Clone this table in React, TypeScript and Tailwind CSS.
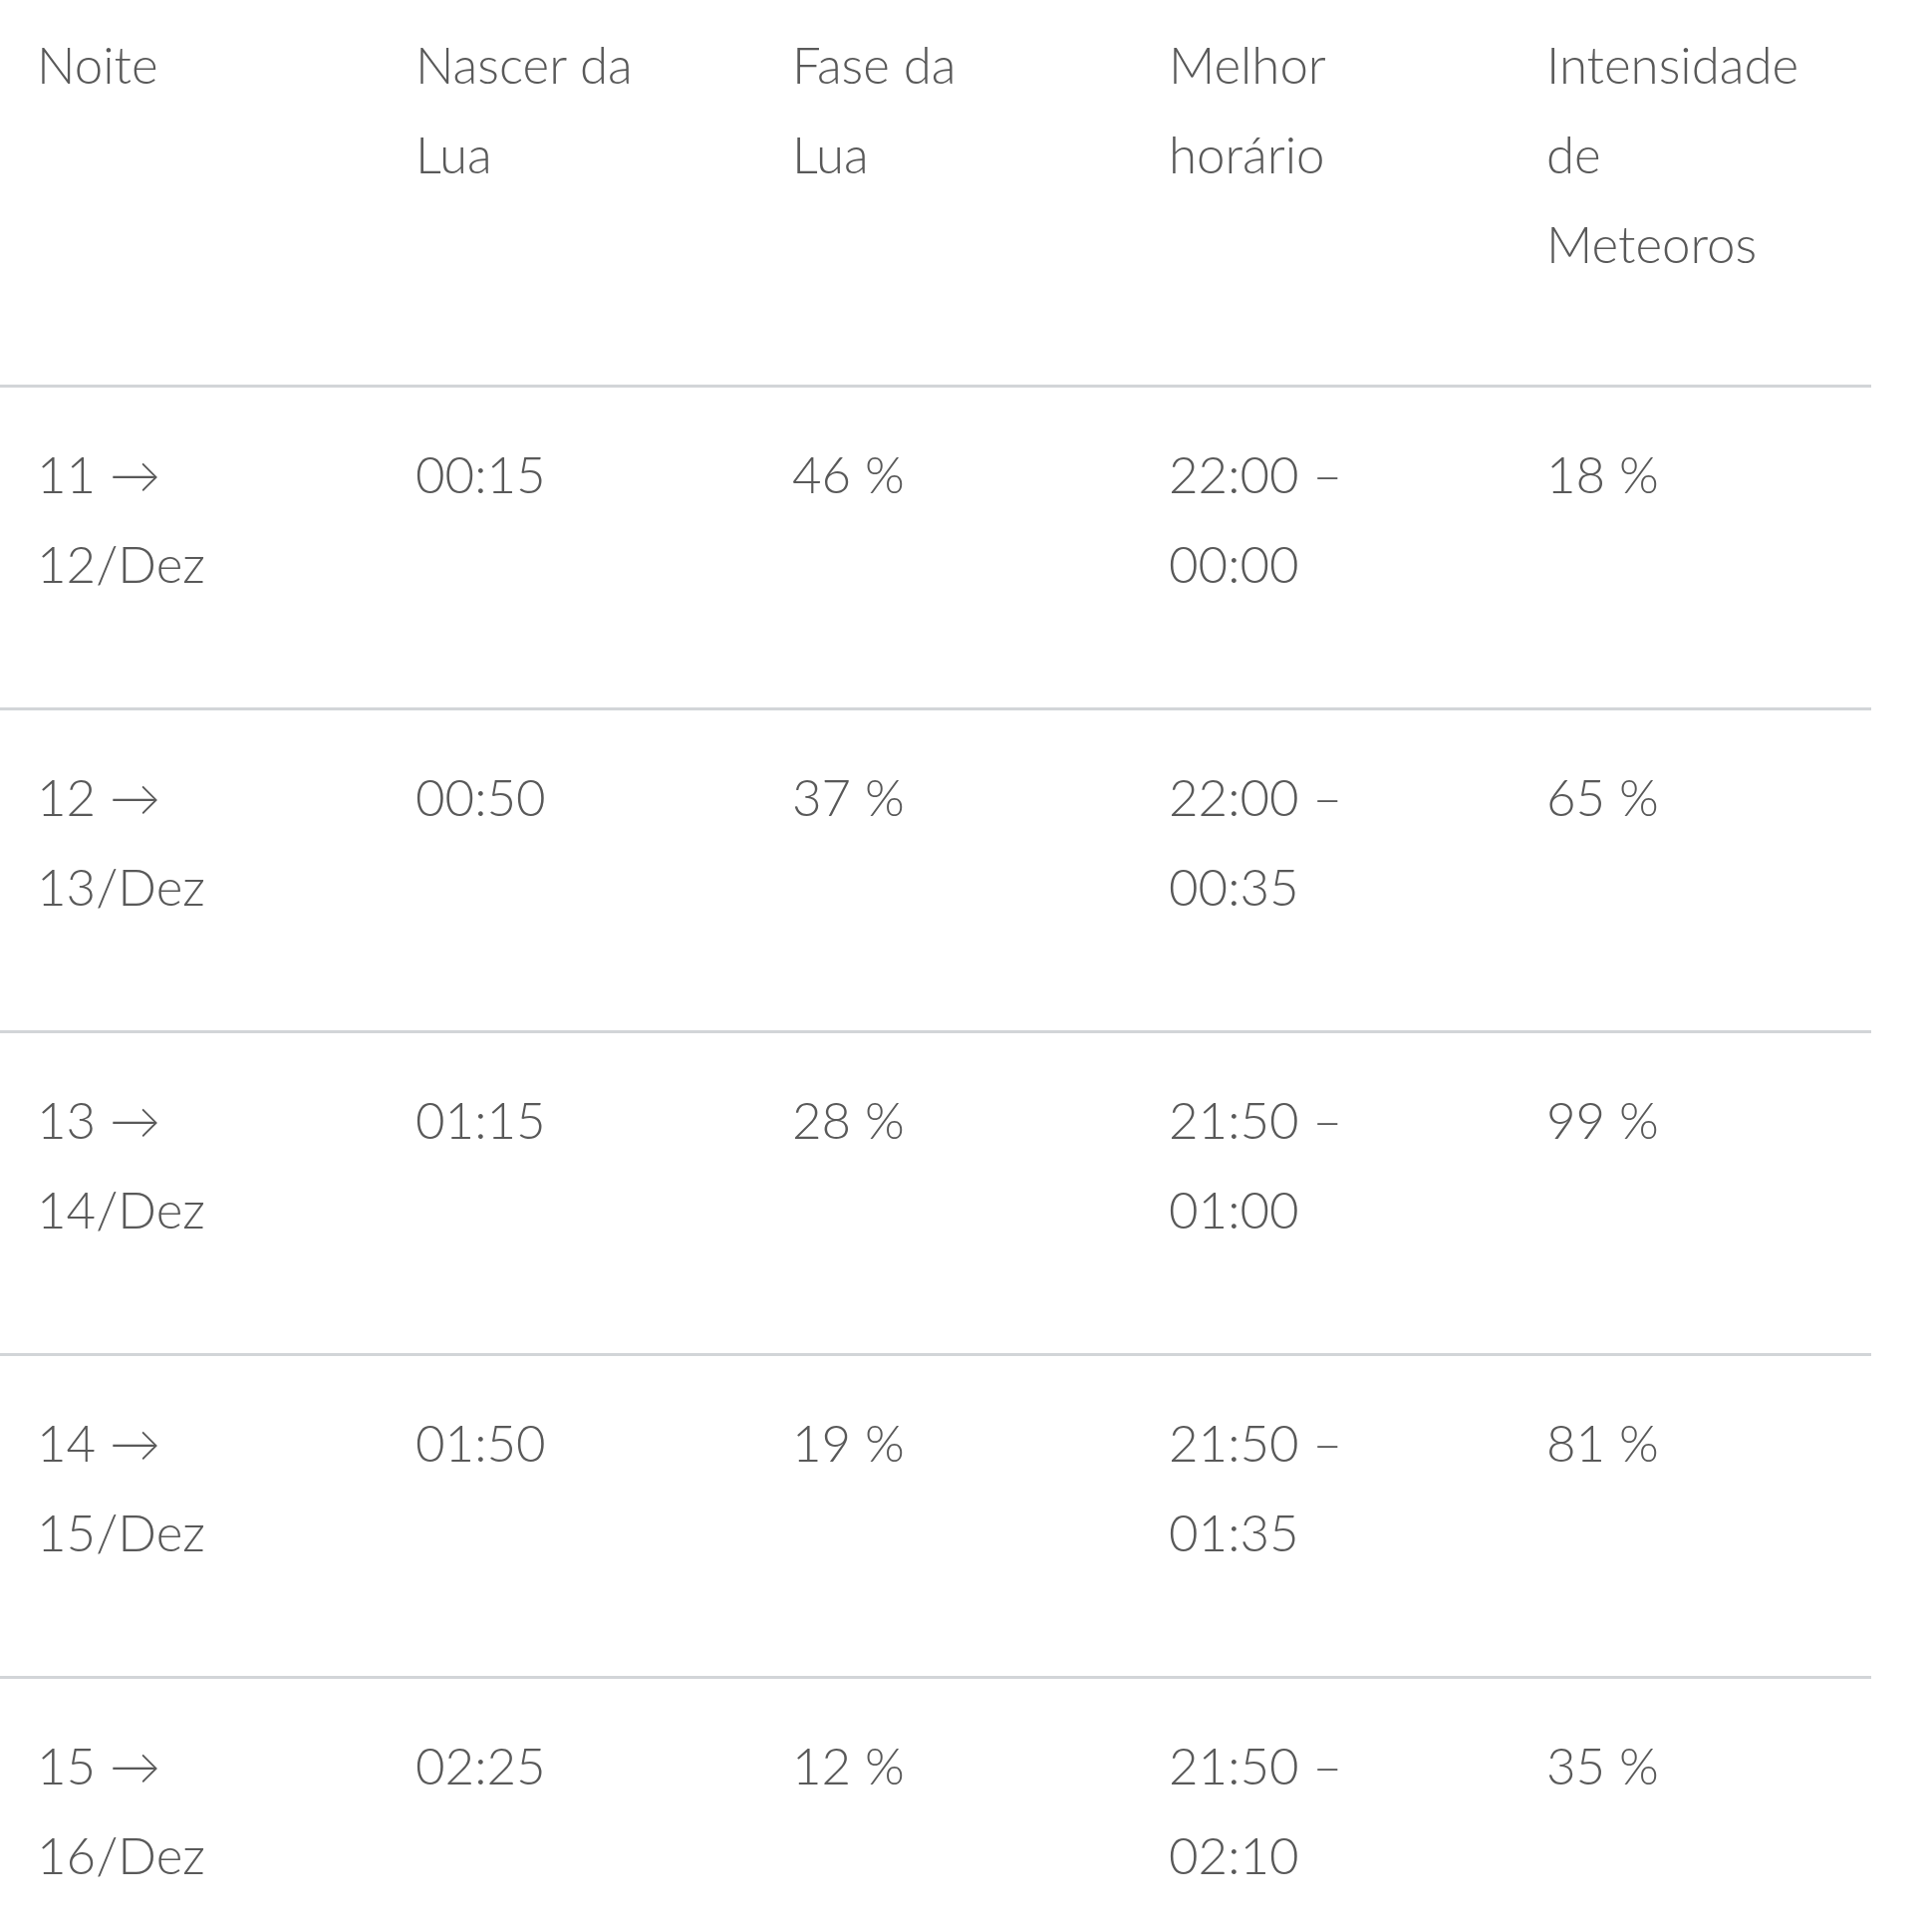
const header = [
  ['Noite'],
  ['Nascer da', 'Lua'],
  ['Fase da', 'Lua'],
  ['Melhor', 'horário'],
  ['Intensidade', 'de', 'Meteoros'],
];

const rows = [
  [['11 →', '12/Dez'], ['00:15'], ['46 %'], ['22:00 –', '00:00'], ['18 %']],
  [['12 →', '13/Dez'], ['00:50'], ['37 %'], ['22:00 –', '00:35'], ['65 %']],
  [['13 →', '14/Dez'], ['01:15'], ['28 %'], ['21:50 –', '01:00'], ['99 %']],
  [['14 →', '15/Dez'], ['01:50'], ['19 %'], ['21:50 –', '01:35'], ['81 %']],
  [['15 →', '16/Dez'], ['02:25'], ['12 %'], ['21:50 –', '02:10'], ['35 %']],
];

function Cell({ lines }: { lines: string[] }) {
  return (
    <div className="pl-[37px]">
      {lines.map((l, i) => (
        <div key={i} className="whitespace-nowrap">
          {l}
        </div>
      ))}
    </div>
  );
}

export default function App() {
  return (
    <div
      className="w-[1939px] h-[1928px] bg-white overflow-hidden text-[#595959] text-[51px] leading-[90px] font-light"
      style={{ fontFamily: 'Lato, "Noto Sans", sans-serif' }}
    >
      <div className="w-[1878px]">
        <div className="grid grid-cols-[380px_378px_378px_379px_1fr] pt-[20px] pb-[96px] border-b-[3px] border-[#d2d5d8]">
          {header.map((h, i) => (
            <Cell key={i} lines={h} />
          ))}
        </div>
        {rows.map((r, i) => (
          <div
            key={i}
            className="grid grid-cols-[380px_378px_378px_379px_1fr] pt-[42px] pb-[99px] border-b-[3px] border-[#d2d5d8]"
          >
            {r.map((c, j) => (
              <Cell key={j} lines={c} />
            ))}
          </div>
        ))}
      </div>
    </div>
  );
}
